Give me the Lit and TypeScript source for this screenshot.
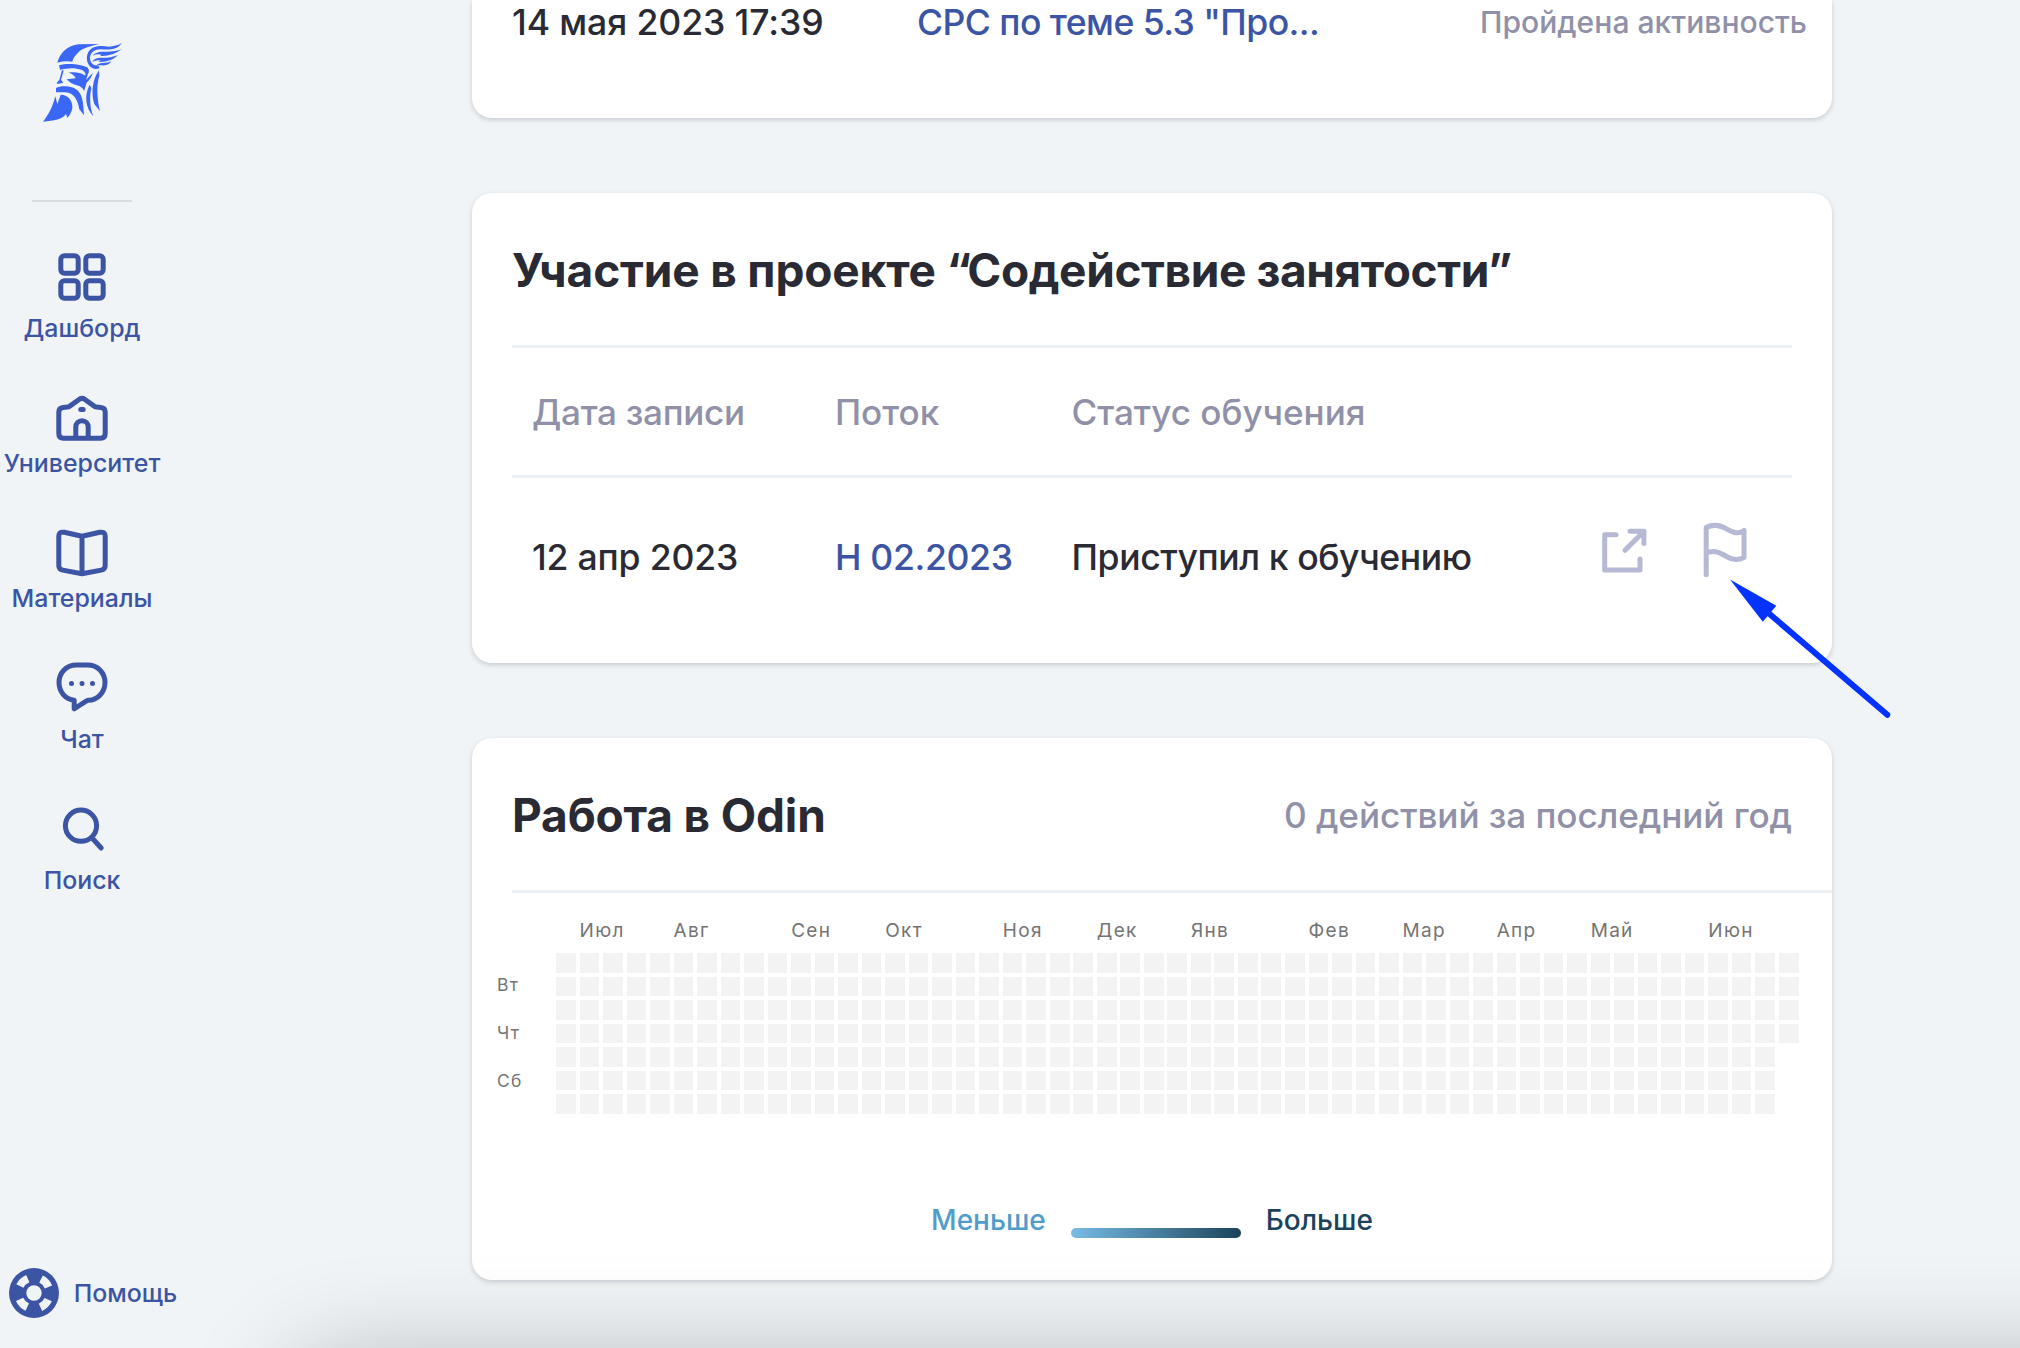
import { LitElement, html, css, svg } from "lit";
import { customElement } from "lit/decorators.js";

interface NavItem {
  label: string;
  top: number;
  height: number;
  icon: unknown;
}

const NAV: NavItem[] = [
  {
    label: "Дашборд", top: 202, height: 111,
    icon: svg`<rect x="60.8" y="255.8" width="17.4" height="17.4" rx="3.6"/><rect x="85.8" y="255.8" width="17.4" height="17.4" rx="3.6"/><rect x="60.8" y="280.8" width="17.4" height="17.4" rx="3.6"/><rect x="85.8" y="280.8" width="17.4" height="17.4" rx="3.6"/>`,
  },
  {
    label: "Университет", top: 343, height: 105,
    icon: svg`<path d="M63.5 438.3q-4.7 0-4.7-4.7V412q0-4.2 4.4-4.6l4-.3q1.4-.2 2.6-1l9.6-6.8q2.6-1.8 5.2 0l9.6 6.8q1.2.8 2.6 1l4 .3q4.4.4 4.4 4.6v21.6q0 4.7-4.7 4.7zM75.800 438v-11a6.200 6.200 0 0 1 12.400 0v11M80.800 409.600h2.400"/>`,
  },
  {
    label: "Материалы", top: 478, height: 105,
    icon: svg`<path d="M82 536.300l-17.800-4q-5.400-.9-5.400 4v29.200q0 3.900 3.900 4.600L82 573.700l19.300-3.600q3.900-.7 3.900-4.600v-29.200q0-4.900-5.400-4zV573"/>`,
  },
  {
    label: "Чат", top: 613, height: 111,
    icon: svg`<path d="M76.500 665h11c10.500 0 17.500 8 17.500 17.600S97.500 700.300 88.500 700.300c-2.500.2-8 4.800-14.300 8.500v-8.600C65.500 699.500 59 691.800 59 682.600 59 673 66 665 76.500 665z"/><path d="M71.500 683.600h.01M82 683.600h.01M92.500 683.600h.01"/>`,
  },
  {
    label: "Поиск", top: 754, height: 111,
    icon: svg`<circle cx="81" cy="825.7" r="15.6"/><path d="M92.500 838.500l8.700 9.500"/>`,
  },
];

const MONTHS: [string, number][] = [
  ["Июл", 1], ["Авг", 5], ["Сен", 10], ["Окт", 14], ["Ноя", 19], ["Дек", 23],
  ["Янв", 27], ["Фев", 32], ["Мар", 36], ["Апр", 40], ["Май", 44], ["Июн", 49],
];
const DAYS = ["Вт", "Чт", "Сб"];
const CELLS = 52 * 7 + 4;

@customElement("side-bar")
class SideBar extends LitElement {
  static styles = css`
    :host { display: flex; flex-direction: column; width: 200px; height: 1348px; color: #3c54a4; font: 500 24.9px/30px Inter, sans-serif; }
    .logo { width: 110px; height: 110px; margin: 30px 0 60px 30px; fill: #3b67f6; display: block; }
    .rule { width: 100px; height: 2px; margin-left: 32px; background: #d9dde0; }
    .nav { width: 164px; flex: 1; }
    .item { display: flex; flex-direction: column; align-items: center; white-space: nowrap; }
    .item svg { display: block; fill: none; stroke: #3c54a4; stroke-width: 5; stroke-linecap: round; stroke-linejoin: round; }
    .help { display: flex; align-items: center; gap: 15px; height: 50px; margin: 0 0 30px 8.7px; }
    .help svg { width: 50px; height: 50px; display: block; }
  `;
  render() {
    return html`
      <svg class="logo" viewBox="0 0 330 330">
        <path d="M82 98C90 68 112 47 146 43L207 42C184 48 156 54 144 68C135 77 129 84 127 95Q105 91 82 98Z"/>
        <path d="M276 39C266 46 250 48 236 50C210 46 186 48 175 66C166 84 171 106 188 115Q200 119 209 114L205 107C190 108 180 98 180 84C181 68 194 58 212 58C236 60 262 60 276 39Z"/>
        <path d="M276 57C262 64 240 66 218 65C204 65 192 70 188 77Q202 71 214 74L211 78Q246 80 276 57Z"/>
        <path d="M264 75C246 83 226 84 208 83C198 84 191 88 187 96Q198 89 212 91L206 96Q242 98 264 75Z"/>
        <path d="M244 94C234 99 220 98 210 100L196 107Q206 105 216 106Q236 108 244 94Z"/>
        <path d="M87 106C112 98 152 102 172 112Q178 118 176 128L168 139Q166 124 156 120C134 112 112 114 90 119Z"/>
        <path d="M96 120L101 122L93 149L100 158L82 162L80 158L88 150Z"/>
        <path d="M116 128C132 126 150 126 163 136L174 132L168 150L188 129Q186 142 170 158L162 184Q158 170 140 166C128 163 118 156 110 148L137 145Q134 134 116 128Z"/>
        <path d="M78 174C92 166 116 168 132 174C152 184 158 204 160 228L162 256L148 238C144 212 132 188 106 187L78 187Z"/>
        <path d="M76 199L82 222L92 194C116 194 129 214 127 234Q124 252 112 263L108 252C98 268 72 272 39 275C56 254 68 230 76 199Z"/>
        <path d="M179 164C162 196 166 232 190 259C178 228 179 198 184 174Z"/>
        <path d="M207 121C188 146 182 190 193 222L210 244C202 210 198 168 208 138Z"/>
      </svg>
      <div class="rule"></div>
      <div class="nav">
        ${NAV.map((n) => html`<div class="item">
          <svg width="64" height=${n.height} viewBox="50 ${n.top} 64 ${n.height}">${n.icon}</svg><span>${n.label}</span>
        </div>`)}
      </div>
      <div class="help">
        <svg viewBox="0 0 50 50">
          <circle cx="25" cy="25" r="25" fill="#3c54a4"/>
          <circle cx="25" cy="25" r="15.7" fill="none" stroke="#f0f4f7" stroke-width="8"
            stroke-dasharray="11 13.66" stroke-dashoffset="-6.83"/>
          <circle cx="25" cy="25" r="7.7" fill="#f0f4f7"/>
        </svg>
        <span>Помощь</span>
      </div>`;
  }
}

@customElement("activity-map")
class ActivityMap extends LitElement {
  static styles = css`
    :host { display: block; color: #747474; font: 400 19px/20px Inter, sans-serif; letter-spacing: 1.3px; }
    .months { display: grid; grid-template-columns: repeat(53, 23.53px); height: 32px; padding: 28px 0 0 84px; }
    .months span { grid-row: 1; white-space: nowrap; width: 0; }
    .body { display: flex; }
    .days { width: 59px; padding: 22px 0 0 25px; font-size: 17.5px; display: flex; flex-direction: column; gap: 28px; height: 116px; }
    .cells { display: grid; grid-auto-flow: column; grid-template-rows: repeat(7, 23.5px); grid-auto-columns: 23.53px; }
    .cell { width: 19.7px; height: 19.7px; background: #f3f3f3; }
  `;
  render() {
    return html`
      <div class="months">${MONTHS.map(([m, c]) => html`<span style="grid-column:${c + 1}">${m}</span>`)}</div>
      <div class="body">
        <div class="days">${DAYS.map((d) => html`<div>${d}</div>`)}</div>
        <div class="cells">${Array.from({ length: CELLS }, () => html`<div class="cell"></div>`)}</div>
      </div>`;
  }
}

@customElement("app-root")
class AppRoot extends LitElement {
  static styles = css`
    :host { display: flex; position: relative; width: 2020px; height: 1348px; overflow: hidden; background: #f0f4f7; color: #292a33; font: 500 35.6px/44px Inter, sans-serif; white-space: nowrap; }
    main { width: 1360px; margin-left: 272px; display: flex; flex-direction: column; gap: 75px; }
    .card { background: #fff; border-radius: 20px; box-shadow: 0 2px 5px rgba(60, 70, 85, .22); box-sizing: border-box; }
    .recent { height: 118px; border-radius: 0 0 20px 20px; padding: 0 25px 0 40px; display: grid; grid-template-columns: 405px 1fr auto; align-items: start; line-height: 45px; }
    .date { letter-spacing: -.1px; }
    .blue { color: #3c54a4; }
    .topic { letter-spacing: -.55px; }
    .kind { font-size: 30.1px; color: #9091a8; line-height: 44px; }
    .project { height: 470px; padding: 0 40px; }
    .head { height: 152px; line-height: 155px; display: flex; justify-content: space-between; border-bottom: 3px solid #edf1f4; }
    h2 { margin: 0; font-size: 46px; font-weight: 700; line-height: inherit; letter-spacing: -.15px; }
    .quoted { letter-spacing: -.38px; }
    .open { letter-spacing: -4px; }
    .total { color: #9091a8; font-size: 35.15px; letter-spacing: -.08px; }
    .row { display: grid; grid-template-columns: 303px 236.5px 1fr auto; padding-left: 20px; }
    .cols { color: #9091a8; font-size: 35.1px; height: 127px; line-height: 129px; border-bottom: 3px solid #edf1f4; }
    .cols .first { letter-spacing: -.3px; }
    .vals { line-height: 159px; letter-spacing: -.2px; }
    .vals .flow { letter-spacing: -.35px; }
    .vals .status { letter-spacing: -.42px; }
    .acts { width: 192px; height: 100px; fill: none; stroke: #b5b9d3; stroke-width: 5; stroke-linecap: round; stroke-linejoin: round; }
    .work { height: 542px; display: flex; flex-direction: column; }
    .work .head { margin-left: 40px; padding-right: 40px; }
    .legend { display: flex; justify-content: center; gap: 25px; font-size: 28px; line-height: 36px; margin-top: auto; padding-bottom: 42px; }
    .less { color: #509cca; }
    .more { color: #1b435b; }
    .bar { width: 170px; height: 10px; margin-top: 26px; border-radius: 5px; background: linear-gradient(90deg, #78bce6, #1b435b); }
    .arrow { position: absolute; left: 1720px; top: 570px; width: 180px; height: 160px; }
    .window { position: absolute; left: 300px; top: 1370px; width: 1900px; height: 200px; border-radius: 20px; box-shadow: 0 0 110px rgba(0, 0, 0, .31); }
  `;
  render() {
    return html`
      <side-bar></side-bar>
      <main>
        <section class="card recent">
          <span class="date">14 мая 2023 17:39</span>
          <span class="blue topic">СРС по теме 5.3 "Про...</span>
          <span class="kind">Пройдена активность</span>
        </section>
        <section class="card project">
          <div class="head"><h2>Участие в проекте <span class="open">“</span><span class="quoted">Содействие занятости”</span></h2></div>
          <div class="row cols"><span class="first">Дата записи</span><span>Поток</span><span>Статус обучения</span></div>
          <div class="row vals">
            <span>12 апр 2023</span><span class="blue flow">Н 02.2023</span><span class="status">Приступил к обучению</span>
            <svg class="acts" viewBox="1600 478 192 100">
              <path d="M1616 534.800h-11.300V570H1640v-11M1630 531.200h13.900V543.500M1643 532.300L1625 550.300"/>
              <path d="M1706.200 574.700V527.500C1714 523.500 1721 525.500 1727.500 529.300S1738 534.300 1744 530.500V557.500C1738 560.500 1733 560.500 1726.500 556.500S1714 549.500 1706.200 553.300"/>
            </svg>
          </div>
        </section>
        <section class="card work">
          <div class="head"><h2>Работа в Odin</h2><span class="total">0 действий за последний год</span></div>
          <activity-map></activity-map>
          <div class="legend"><span class="less">Меньше</span><span class="bar"></span><span class="more">Больше</span></div>
        </section>
      </main>
      <div class="window"></div>
      <svg class="arrow" viewBox="1720 570 180 160">
        <path d="M1730 579.500L1776.300 605.700L1762.800 621.700Z" fill="#0433ff"/>
        <path d="M1769 613.500L1887.300 714.700" stroke="#0433ff" stroke-width="6" stroke-linecap="round"/>
      </svg>`;
  }
}
